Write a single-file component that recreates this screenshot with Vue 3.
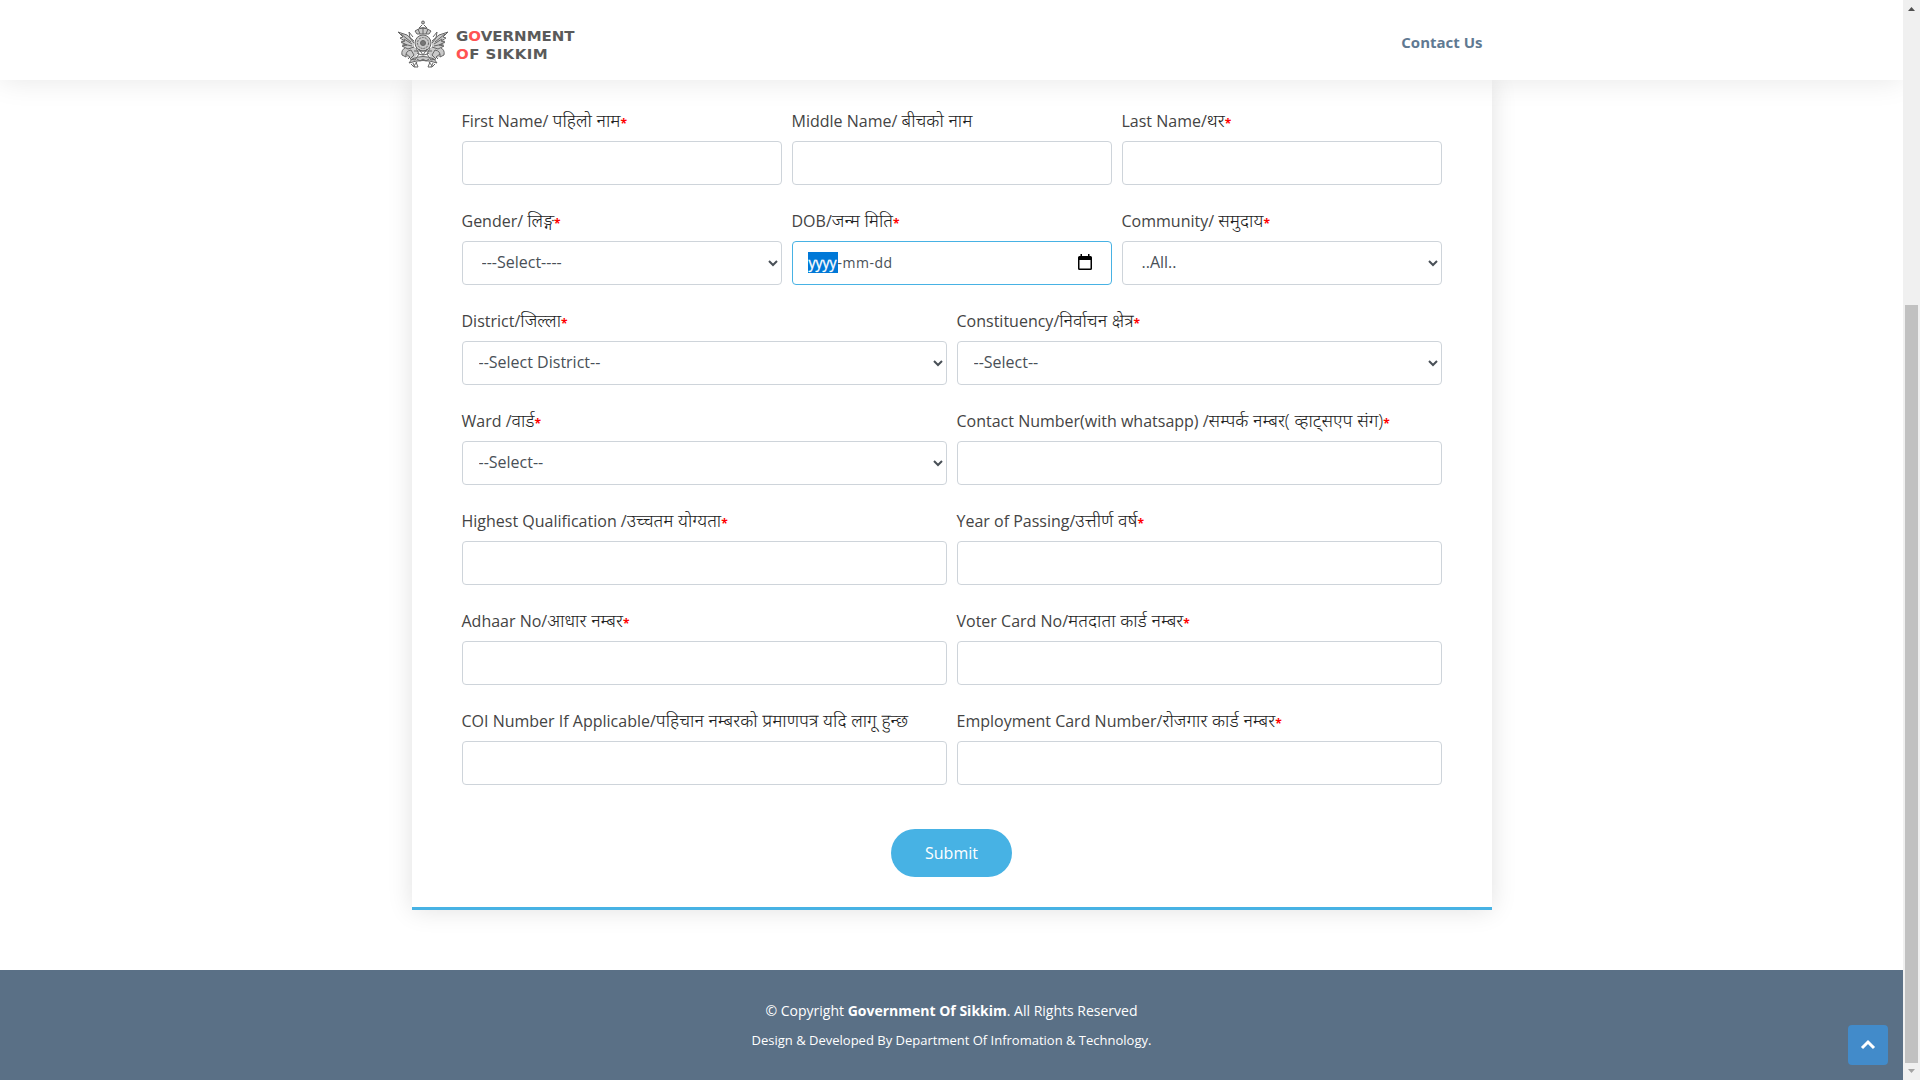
<script setup>
const rows = [
  [
    { en: 'First Name/ ', ne: 'पहिलो नाम', req: true },
    { en: 'Middle Name/ ', ne: 'बीचको नाम' },
    { en: 'Last Name/', ne: 'थर', req: true },
  ],
  [
    { en: 'Gender/ ', ne: 'लिङ्ग', req: true, select: '---Select----', indent: true },
    { en: 'DOB/', ne: 'जन्म मिति', req: true, date: true },
    { en: 'Community/ ', ne: 'समुदाय', req: true, select: '..All..', indent: true },
  ],
  [
    { en: 'District/', ne: 'जिल्ला', req: true, select: '--Select District--' },
    { en: 'Constituency/', ne: 'निर्वाचन क्षेत्र', req: true, select: '--Select--' },
  ],
  [
    { en: 'Ward /', ne: 'वार्ड', req: true, select: '--Select--' },
    { en: 'Contact Number(with whatsapp) /', ne: 'सम्पर्क नम्बर( व्हाट्सएप संग)', req: true },
  ],
  [
    { en: 'Highest Qualification /', ne: 'उच्चतम योग्यता', req: true },
    { en: 'Year of Passing/', ne: 'उत्तीर्ण वर्ष', req: true },
  ],
  [
    { en: 'Adhaar No/', ne: 'आधार नम्बर', req: true },
    { en: 'Voter Card No/', ne: 'मतदाता कार्ड नम्बर', req: true },
  ],
  [
    { en: 'COI Number If Applicable/', ne: 'पहिचान नम्बरको प्रमाणपत्र यदि लागू हुन्छ' },
    { en: 'Employment Card Number/', ne: 'रोजगार कार्ड नम्बर', req: true },
  ],
]
</script>

<template>
  <div class="window">
    <div class="page">
      <header class="header">
        <a class="logo">
          <svg class="emblem" viewBox="0 0 52 48" width="52" height="48" fill="none" stroke="#666" stroke-width="1">
            <g fill="#888" fill-opacity="0.45" stroke="none">
              <path d="M18 11q8-6 16 0l-2 3H20zM17 21L10 15 1 12l5 5-2 5 2 5 11 3zM35 21l7-6 9-3-5 5 2 5-2 5-11 3zM8 28q-4 2-3 7l4 2 8 2 4-6-3-6zM44 28q4 2 3 7l-4 2-8 2-4-6 3-6zM15 39q11-5 22 0l3 4q-14-5-28 0z" />
              <circle cx="26" cy="23" r="8" />
            </g>
            <path d="M26 1v3M25 5l-3 3h8l-3-3M18 11q8-6 16 0l-2 3H20zM21 9l2 5M26 7v7M31 9l-2 5" />
            <circle cx="26" cy="2.500" r="1.500" />
            <circle cx="26" cy="23" r="8" />
            <circle cx="26" cy="23" r="5.5" stroke-dasharray="2 1" />
            <circle cx="26" cy="23" r="2.5" fill="#777" />
            <path d="M17 21L10 15 1 12l5 5-3 1 5 3-4 1 6 3-5 1 6 3 6-2M16 17l-4-5 1 6 4 5M4 14l10 8M7 19l8 5M6 24l9 2" />
            <path d="M35 21l7-6 9-3-5 5 3 1-5 3 4 1-6 3 5 1-6 3-6-2M36 17l4-5-1 6-4 5M48 14l-10 8M45 19l-8 5M46 24l-9 2" />
            <path d="M8 28q-4 2-3 7l4 2q-1-6 5-7l3 5-4 4 5 1 4-6-3-6M44 28q4 2 3 7l-4 2q1-6-5-7l-3 5 4 4-5 1-4-6 3-6" />
            <path d="M9 34l4 3-2 2M43 34l-4 3 2 2M17 31h18M20 33q6 4 12 0M22 29l4 6 4-6" />
            <path d="M15 39q11-5 22 0l3 4q-14-5-28 0zM16 43l2 4M20 42l-4 5M36 43l-2 4M32 42l4 5M14 44l3 3h4l-2-5M38 44l-3 3h-4l2-5M20 39l3 2 3-2 3 2 3-2" />
          </svg>
          <span class="brand"><span class="line">G<i>O</i>VERNMENT</span><span class="line second"><i>O</i>F SIKKIM</span></span>
        </a>
        <nav class="nav">Contact Us</nav>
      </header>
      <main class="content">
        <form class="card" @submit.prevent>
          <div v-for="(row, r) in rows" :key="r" class="row">
            <div v-for="f in row" :key="f.en" class="field">
              <label class="label">{{ f.en }}<span class="ne">{{ f.ne }}</span><span v-if="f.req" class="req">*</span></label>
              <select v-if="f.select" class="control select" :class="{ indent: f.indent }"><option>{{ f.select }}</option></select>
              <div v-else-if="f.date" class="control date">
                <span><span class="year">yyyy</span>-mm-dd</span>
                <svg width="14" height="16" viewBox="0 0 14 16"><path fill="#000" fill-rule="evenodd" d="M2.5 0H4v2h6V0h1.500v2H12.500Q14 2 14 3.500V14.500Q14 16 12.500 16H1.500Q0 16 0 14.500V3.500Q0 2 1.500 2H2.500zM1.500 6v8.500h11V6z" /></svg>
              </div>
              <input v-else type="text" class="control" />
            </div>
          </div>
          <div class="actions"><button class="submit">Submit</button></div>
        </form>
      </main>
      <footer class="footer">
        <div class="copy">© Copyright <b>Government Of Sikkim</b>. All Rights Reserved</div>
        <div class="credits">Design &amp; Developed By Department Of Infromation &amp; Technology.</div>
      </footer>
      <a class="top"><svg width="16" height="12" viewBox="0 0 16 12"><path d="M2 9l6-6 6 6" fill="none" stroke="#fff" stroke-width="3" /></svg></a>
    </div>
    <div class="scrollbar">
      <svg class="arrow" width="17" height="17" viewBox="0 0 17 17"><path d="M5 11h7L8.500 7z" fill="#505050" /></svg>
      <div class="thumb"></div>
      <svg class="arrow" width="17" height="17" viewBox="0 0 17 17"><path d="M5 6h7L8.500 10z" fill="#a3a3a3" /></svg>
    </div>
  </div>
</template>

<style>
body { background: #fff; overflow: hidden; }
</style>

<style scoped>
* { box-sizing: border-box; }
.window { display: flex; width: 1920px; height: 1080px; overflow: hidden; font-family: "Open Sans", "Noto Sans Devanagari", "Noto Sans", sans-serif; color: #444; }
.page { position: relative; width: 1903px; display: flex; flex-direction: column; overflow: hidden; }
.header { position: relative; z-index: 2; flex: none; height: 80px; background: #fff; box-shadow: 0 0 30px rgba(0, 0, 0, 0.1); display: flex; justify-content: space-between; padding: 0 420.5px 0 397px; }
.logo { display: flex; }
.emblem { margin-top: 20px; }
.brand { display: flex; flex-direction: column; padding: 28px 0 0 7px; font: bold 15px/17.5px "DejaVu Sans", sans-serif; color: #5a5a5a; }
.line { display: block; transform: scaleY(0.93); }
.brand .second { letter-spacing: 0.4px; }
.brand i { font-style: normal; color: #ff5252; }
.nav { font-weight: 700; font-size: 15px; line-height: 84px; color: #5f7992; }
.content { flex: none; height: 890px; padding: 0 411.5px; }
.card { height: 830px; padding: 27px 50px 0; border-bottom: 3px solid #47b2e4; box-shadow: 0 0 24px rgba(0, 0, 0, 0.12); }
.row { display: flex; gap: 10px; height: 100px; }
.field { flex: 1 1 0; min-width: 0; }
.label { display: block; height: 34px; line-height: 28px; font-size: 16px; white-space: nowrap; }
.ne { font-size: 18px; font-weight: 300; line-height: 1; color: #222; }
.req { position: relative; top: 1px; color: red; font-size: 12px; font-weight: 700; line-height: 1; }
.control { display: block; width: 100%; height: 44px; border: 1px solid #ced4da; border-radius: 4px; background: #fff; padding: 6px 12px; font-family: inherit; font-size: 16px; color: #495057; }
.select { padding: 5px 13px 7px 12px; }
.select.indent { padding-left: 15px; }
.date { display: flex; align-items: center; justify-content: space-between; border-color: #47b2e4; padding: 0 19px 2px 15px; font-size: 14px; letter-spacing: 0.5px; }
.year { display: inline-block; height: 21px; line-height: 21px; background: #0078d7; color: #fff; letter-spacing: 0; padding: 0 1px; -webkit-text-stroke: 0.3px #fff; }
.actions { display: flex; justify-content: center; padding-top: 22px; }
.submit { width: 121px; height: 48px; border: 0; border-radius: 50px; background: #47b2e4; color: #fff; font: 16px "Open Sans", sans-serif; padding: 0; }
.footer { flex: 1; background: #5a7086; color: #fff; text-align: center; padding-top: 30px; }
.copy { font-size: 14px; line-height: 21px; }
.credits { font-size: 13px; line-height: 20px; padding-top: 9px; }
.top { position: absolute; right: 15px; bottom: 15px; width: 40px; height: 40px; border-radius: 4px; background: #428bca; display: flex; align-items: center; justify-content: center; }
.scrollbar { width: 17px; background: #f0f0f0; display: flex; flex-direction: column; justify-content: space-between; }
.arrow { display: block; flex: none; }
.thumb { height: 758px; width: 13px; margin: 288px auto 0 2px; background: #c1c1c1; }
</style>
